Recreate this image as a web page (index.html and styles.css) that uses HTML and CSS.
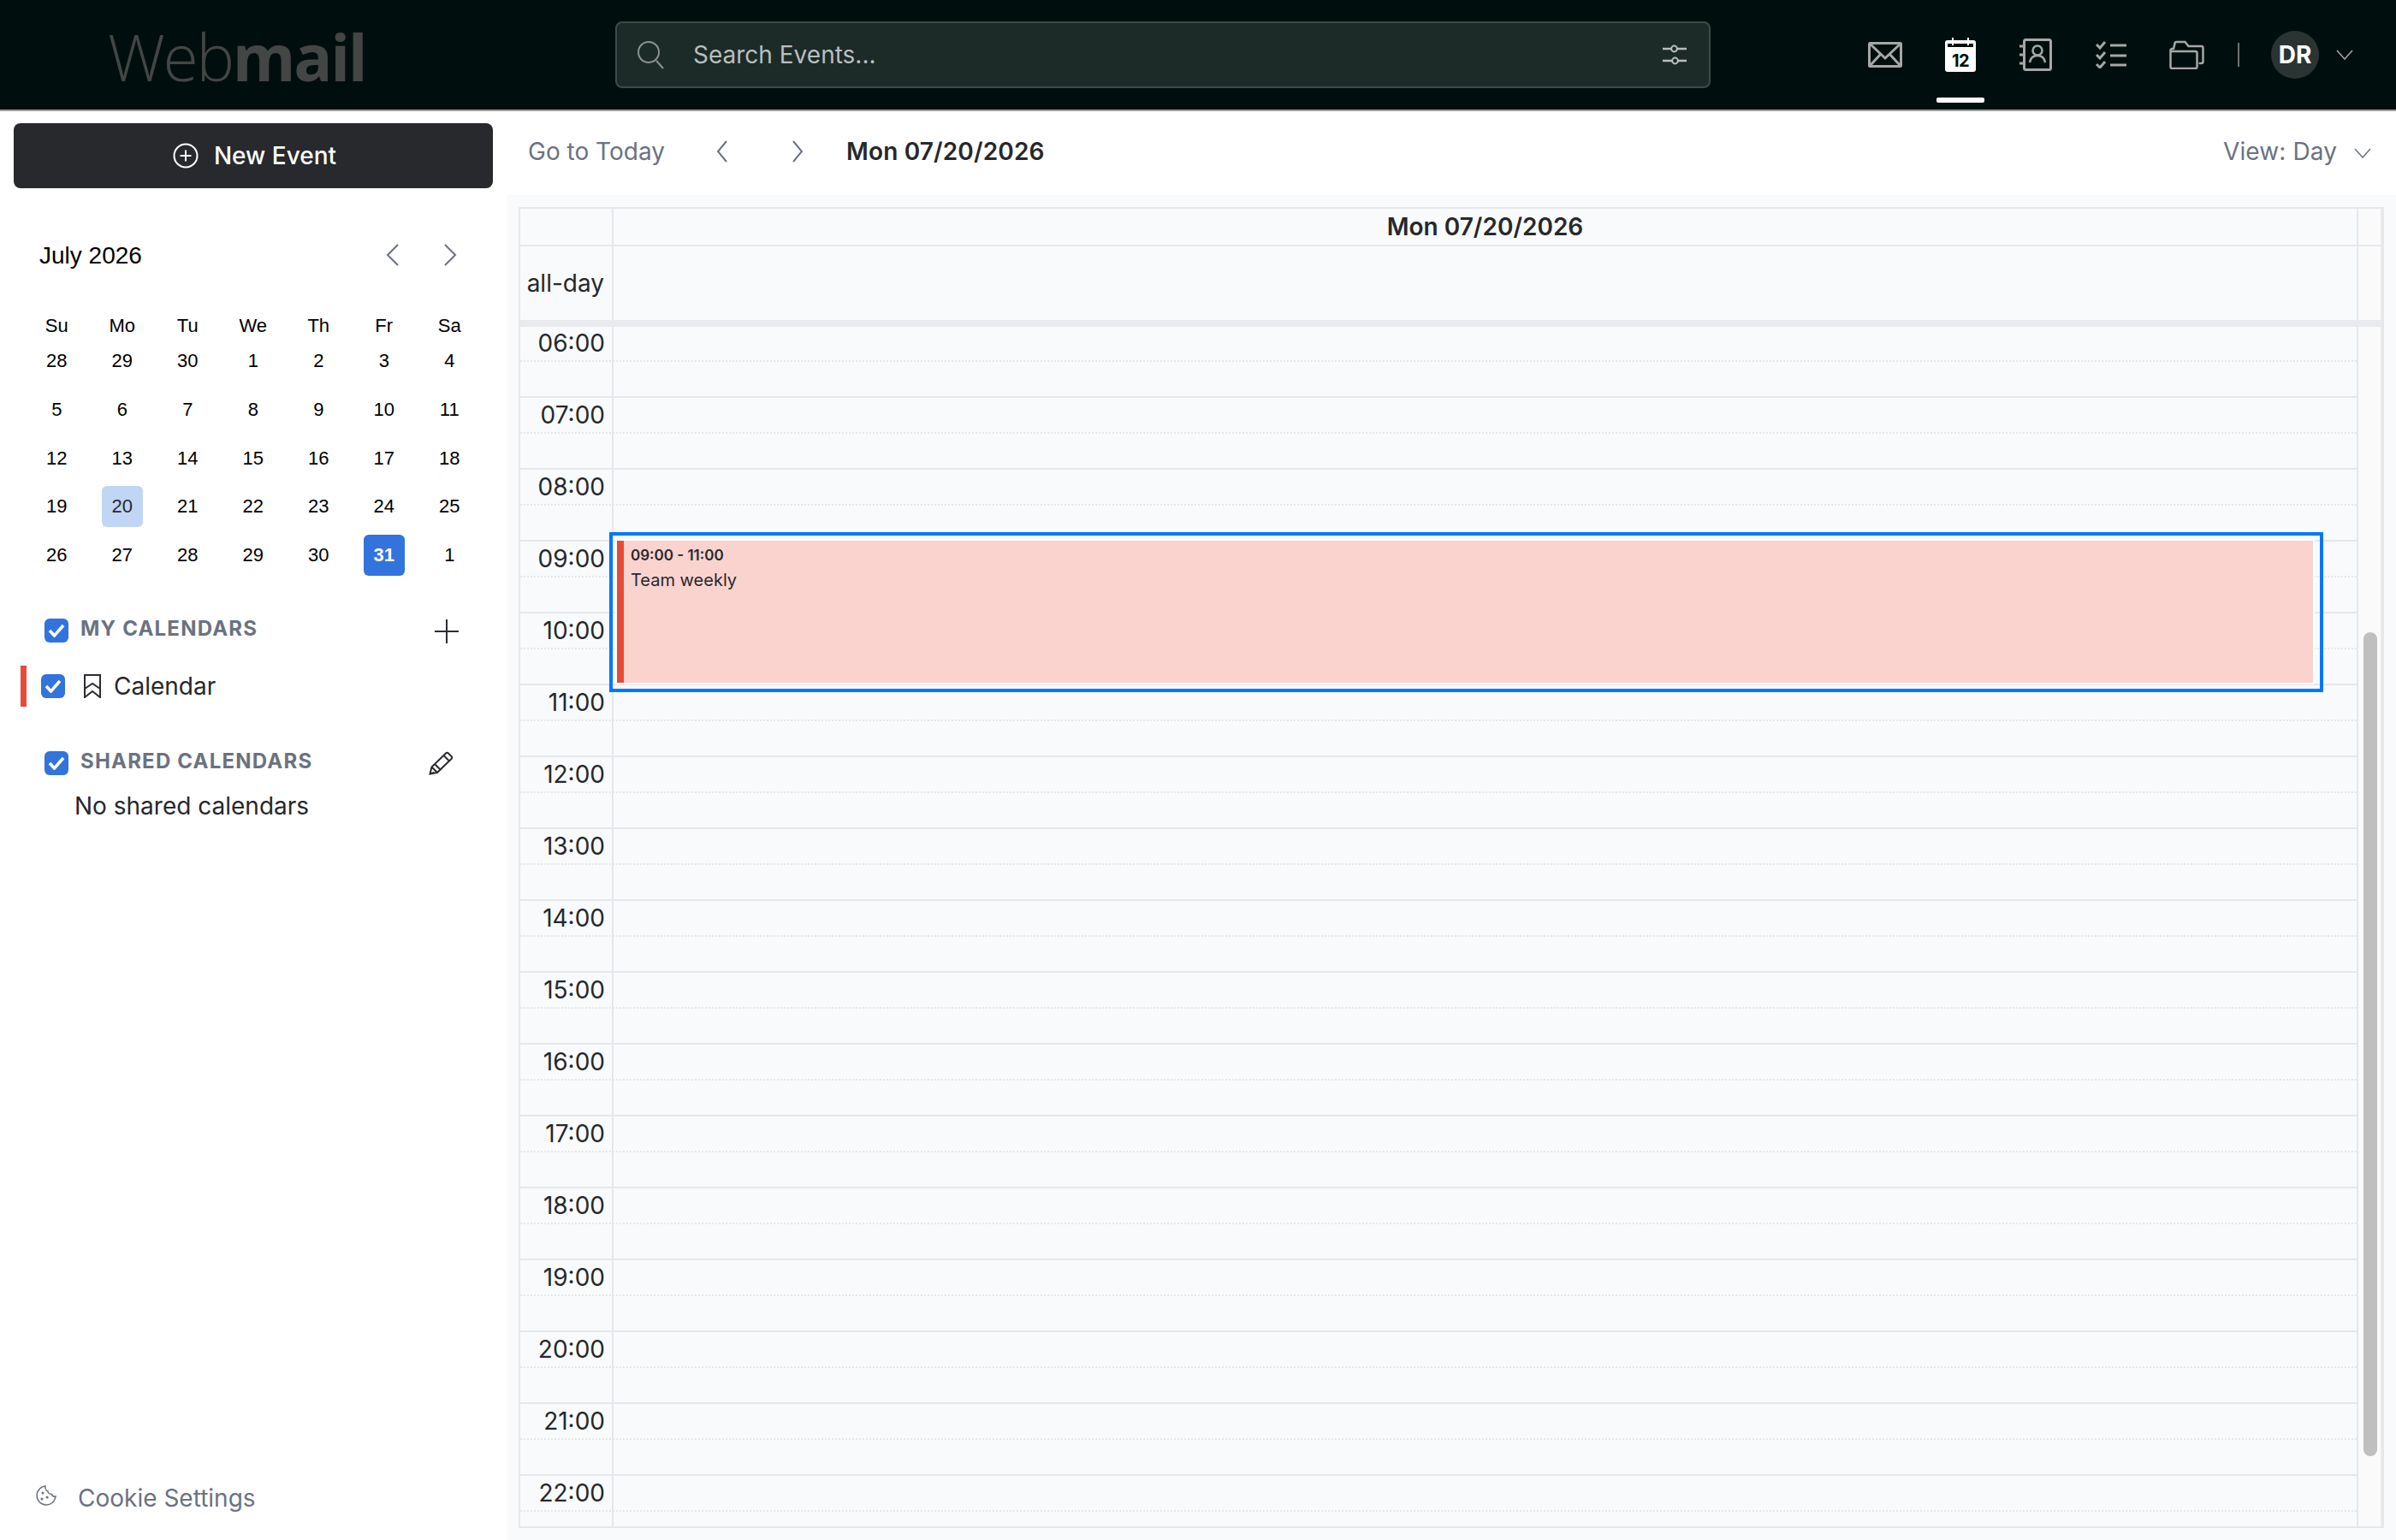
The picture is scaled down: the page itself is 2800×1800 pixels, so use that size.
FILE: index.html
```html
<!DOCTYPE html>
<html lang="en">
<head>
    <meta charset="UTF-8">
    <meta name="viewport" content="width=device-width, initial-scale=1.0">
    <title>Webmail Calendar</title>
    <link rel="stylesheet" href="styles.css">
</head>
<body>

    <header class="topbar">
        <div class="logo"><span class="logo-light">Web</span><span class="logo-bold">mail</span></div>

        <div class="search">
            <svg class="search-icon" width="32" height="34" viewBox="0 0 32 34" fill="none" stroke="#8b9391" stroke-width="2">
                <circle cx="13" cy="14" r="12"/>
                <path d="M22 24l8 9"/>
            </svg>
            <span class="search-text">Search Events...</span>
            <svg class="search-filter" width="28" height="26" viewBox="0 0 28 26" fill="none" stroke="#b9bfbd" stroke-width="2.5">
                <path d="M0 6h10M17 6h11M0 20h11M18 20h10"/>
                <circle cx="13.5" cy="6" r="3.4" stroke-width="2"/>
                <circle cx="14.5" cy="20" r="3.4" stroke-width="2"/>
            </svg>
        </div>

        <nav class="apps">
            <a class="app">
                <svg width="40" height="30" viewBox="0 0 40 30" fill="none" stroke="#a4a8a6" stroke-width="3">
                    <rect x="1.5" y="1.5" width="37" height="27" rx="1"/>
                    <path d="M2 2l18 17L38 2M2 28l13-14M38 28L25 14"/>
                </svg>
            </a>
            <a class="app app-active">
                <svg width="36" height="40" viewBox="0 0 36 40">
                    <path d="M3 3h5V0h2v3h16V0h2v3h5a3 3 0 0 1 3 3v31a3 3 0 0 1-3 3H3a3 3 0 0 1-3-3V6a3 3 0 0 1 3-3z" fill="#fff"/>
                    <rect x="3" y="7" width="30" height="4" fill="#000f0d"/>
                    <path d="M8 3h2v6H8zM26 3h2v6h-2z" fill="#fff"/>
                    <text class="app-date" x="18" y="34" text-anchor="middle">12</text>
                </svg>
            </a>
            <a class="app">
                <svg width="38" height="38" viewBox="0 0 38 38" fill="none" stroke="#a4a8a6" stroke-width="3">
                    <rect x="5.5" y="1.5" width="31" height="35" rx="2"/>
                    <circle cx="21" cy="14" r="5.5" stroke-width="2.5"/>
                    <path d="M12 28c1-6 5-8 9-8s8 2 9 8" stroke-width="2.5"/>
                    <path d="M0 9h5M0 19h5M0 29h5"/>
                </svg>
            </a>
            <a class="app">
                <svg width="36" height="32" viewBox="0 0 36 32" fill="none" stroke="#a4a8a6" stroke-width="3">
                    <path d="M1 4l4 4 6-7M1 16l4 4 6-7M1 27l4 4 6-7"/>
                    <path d="M17 5h19M17 17h19M17 28h19"/>
                </svg>
            </a>
            <a class="app">
                <svg width="41" height="34" viewBox="0 0 41 34" fill="none" stroke="#a4a8a6" stroke-width="2.5">
                    <path d="M1.5 31V12a2 2 0 0 1 2-2h1.500l1.500-6a2 2 0 0 1 2-2h10l4 5h15a2 2 0 0 1 2 2v16a2 2 0 0 1-2 2h-3"/>
                    <path d="M1.5 31a2 2 0 0 0 2 2h27a2 2 0 0 0 2-2V15a2 2 0 0 0-2-2H1.500"/>
                </svg>
            </a>
        </nav>

        <span class="topbar-divider"></span>
        <span class="avatar">DR</span>
        <svg class="topbar-caret" width="20" height="12" viewBox="0 0 20 12" fill="none" stroke="#a4a8a6" stroke-width="1.5">
            <path d="M1 1l9 10 9-10"/>
        </svg>
    </header>

    <div class="content">
        <aside class="sidebar">
            <button class="new-event" type="button">
                <svg width="30" height="30" viewBox="0 0 30 30" fill="none" stroke="#fff" stroke-width="2">
                    <circle cx="15" cy="15" r="13.5"/>
                    <path d="M15 8.5v13M8.5 15h13"/>
                </svg>
                New Event
            </button>

            <div class="mini-head">
                <span class="mini-title">July 2026</span>
                <svg class="mini-prev" width="16" height="26" viewBox="0 0 16 26" fill="none" stroke="#6b7280" stroke-width="2">
                    <path d="M14 1L2 13l12 12"/>
                </svg>
                <svg class="mini-next" width="16" height="26" viewBox="0 0 16 26" fill="none" stroke="#6b7280" stroke-width="2">
                    <path d="M2 1l12 12L2 25"/>
                </svg>
            </div>

            <div class="mini-week">
                <span>Su</span><span>Mo</span><span>Tu</span><span>We</span><span>Th</span><span>Fr</span><span>Sa</span>
            </div>
            <div class="mini-dates">
                <span>28</span><span>29</span><span>30</span><span>1</span><span>2</span><span>3</span><span>4</span>
                <span>5</span><span>6</span><span>7</span><span>8</span><span>9</span><span>10</span><span>11</span>
                <span>12</span><span>13</span><span>14</span><span>15</span><span>16</span><span>17</span><span>18</span>
                <span>19</span><span class="mini-selected">20</span><span>21</span><span>22</span><span>23</span><span>24</span><span>25</span>
                <span>26</span><span>27</span><span>28</span><span>29</span><span>30</span><span class="mini-today">31</span><span>1</span>
            </div>

            <div class="cal-section cal-section-mine">
                <span class="check"><svg width="20" height="16" viewBox="0 0 20 16" fill="none" stroke="#fff" stroke-width="3.5"><path d="M2 8l5.500 6L18 2"/></svg></span>
                <span class="cal-section-title">MY CALENDARS</span>
                <svg class="cal-section-add" width="28" height="28" viewBox="0 0 28 28" fill="none" stroke="#2a2c30" stroke-width="2">
                    <path d="M14 0v28M0 14h28"/>
                </svg>
            </div>

            <div class="cal-item">
                <span class="cal-color"></span>
                <span class="check"><svg width="20" height="16" viewBox="0 0 20 16" fill="none" stroke="#fff" stroke-width="3.5"><path d="M2 8l5.500 6L18 2"/></svg></span>
                <svg class="cal-bookmark" width="20" height="28" viewBox="0 0 20 28" fill="none" stroke="#2a2c30" stroke-width="2">
                    <path d="M1 1h18v26l-9-7-9 7zM1 17l9-6 9 6"/>
                </svg>
                <span class="cal-name">Calendar</span>
            </div>

            <div class="cal-section cal-section-shared">
                <span class="check"><svg width="20" height="16" viewBox="0 0 20 16" fill="none" stroke="#fff" stroke-width="3.5"><path d="M2 8l5.500 6L18 2"/></svg></span>
                <span class="cal-section-title">SHARED CALENDARS</span>
                <svg class="cal-section-edit" width="29" height="28" viewBox="0 0 29 28" fill="none" stroke="#2a2c30" stroke-width="2">
                    <path d="M1.5 26.5l2-8L20 2.500a2 2 0 0 1 3 0l3.500 3.500a2 2 0 0 1 0 3L10 25z"/>
                    <path d="M3.500 18.500L10 25M7 15l7 7M17.500 5l6.500 6.500M1.500 26.500l5-1.500"/>
                </svg>
            </div>
            <div class="cal-empty">No shared calendars</div>

            <a class="cookie">
                <svg width="24" height="24" viewBox="0 0 24 24" fill="none" stroke="#6b7280" stroke-width="1.5">
                    <path d="M11 1a11 11 0 1 0 12 12c-2 .5-4-.5-4.500-2.500C16 10.500 14 9 14 7c-2-.5-3.500-3-3-6z"/>
                    <circle cx="8" cy="9" r=".8"/><circle cx="13" cy="14" r=".8"/><circle cx="7" cy="16" r=".8"/>
                </svg>
                <span>Cookie Settings</span>
            </a>
        </aside>

        <main class="main">
            <div class="toolbar">
                <span class="toolbar-today">Go to Today</span>
                <svg class="toolbar-prev" width="14" height="26" viewBox="0 0 14 26" fill="none" stroke="#6b7280" stroke-width="2">
                    <path d="M12 1L2 13l10 12"/>
                </svg>
                <svg class="toolbar-next" width="14" height="26" viewBox="0 0 14 26" fill="none" stroke="#6b7280" stroke-width="2">
                    <path d="M2 1l10 12L2 25"/>
                </svg>
                <span class="toolbar-date">Mon 07/20/2026</span>
                <span class="toolbar-view">View: Day</span>
                <svg class="toolbar-caret" width="20" height="12" viewBox="0 0 20 12" fill="none" stroke="#6b7280" stroke-width="1.5">
                    <path d="M1 1l9 10 9-10"/>
                </svg>
            </div>

            <div class="board">
                <div class="frame">
                    <div class="head-row">
                        <div class="head-time"></div>
                        <div class="head-day">Mon 07/20/2026</div>
                        <div class="head-gutter"></div>
                    </div>
                    <div class="allday-row">
                        <div class="head-time">all-day</div>
                        <div class="head-day"></div>
                        <div class="head-gutter"></div>
                    </div>

                    <div class="scroller">
                        <div class="slots">
                            <div class="slot"><div class="slot-half">06:00</div></div>
                            <div class="slot"><div class="slot-half">07:00</div></div>
                            <div class="slot"><div class="slot-half">08:00</div></div>
                            <div class="slot"><div class="slot-half">09:00</div></div>
                            <div class="slot"><div class="slot-half">10:00</div></div>
                            <div class="slot"><div class="slot-half">11:00</div></div>
                            <div class="slot"><div class="slot-half">12:00</div></div>
                            <div class="slot"><div class="slot-half">13:00</div></div>
                            <div class="slot"><div class="slot-half">14:00</div></div>
                            <div class="slot"><div class="slot-half">15:00</div></div>
                            <div class="slot"><div class="slot-half">16:00</div></div>
                            <div class="slot"><div class="slot-half">17:00</div></div>
                            <div class="slot"><div class="slot-half">18:00</div></div>
                            <div class="slot"><div class="slot-half">19:00</div></div>
                            <div class="slot"><div class="slot-half">20:00</div></div>
                            <div class="slot"><div class="slot-half">21:00</div></div>
                            <div class="slot"><div class="slot-half">22:00</div></div>
                        </div>
                        <div class="head-gutter"><div class="thumb"></div></div>

                        <div class="event-focus">
                            <div class="event">
                                <div class="event-time">09:00 - 11:00</div>
                                <div class="event-title">Team weekly</div>
                            </div>
                        </div>
                    </div>
                </div>
            </div>
        </main>
    </div>

</body>
</html>
```

FILE: styles.css
```css
* {
    box-sizing: border-box;
}

body {
    margin: 0;
    height: 100vh;
    display: flex;
    flex-direction: column;
    overflow: hidden;
    background-color: #ffffff;
    color: #26282c;
    font-family: Inter, "Noto Sans", sans-serif;
    font-size: 28px;
    line-height: 36px;
}

/* Top bar */
.topbar {
    flex: none;
    height: 130px;
    display: flex;
    align-items: center;
    background-color: #000f0d;
    border-bottom: 2px solid #9a9f9d;
}

.logo {
    width: 719px;
    padding-left: 126px;
    padding-top: 4px;
    font-family: "Open Sans", sans-serif;
    font-size: 75px;
    line-height: 84px;
    color: #434645;
    letter-spacing: -2.3px;
}

.logo-light {
    font-weight: 300;
}

.logo-bold {
    font-weight: 700;
}

.search {
    width: 1280px;
    height: 78px;
    display: flex;
    align-items: center;
    padding: 0 26px 0 24px;
    background-color: #1c2a28;
    border: 2px solid #3d4a48;
    border-radius: 8px;
    color: #b9bfbd;
}

.search-text {
    margin-left: 33px;
}

.search-filter {
    margin-left: auto;
}

.apps {
    display: flex;
    margin-left: 160px;
}

.app {
    position: relative;
    width: 88px;
    height: 128px;
    display: flex;
    align-items: center;
    justify-content: center;
}

.app-active::after {
    content: "";
    position: absolute;
    left: 16px;
    bottom: 8px;
    width: 56px;
    height: 6px;
    border-radius: 2px;
    background-color: #ffffff;
}

.app-date {
    font-family: Inter, sans-serif;
    font-size: 20px;
    font-weight: 700;
    letter-spacing: -0.5px;
    fill: #000f0d;
}

.topbar-divider {
    width: 2px;
    height: 28px;
    margin-left: 16px;
    background-color: #6d7372;
}

.avatar {
    width: 56px;
    height: 56px;
    margin-left: 37px;
    display: flex;
    align-items: center;
    justify-content: center;
    border-radius: 50%;
    background-color: #2a3533;
    color: #ffffff;
    font-weight: 700;
}

.topbar-caret {
    margin-left: 20px;
}

/* Layout below the top bar */
.content {
    flex: 1;
    min-height: 0;
    display: flex;
}

.sidebar {
    width: 592px;
    display: flex;
    flex-direction: column;
    padding-top: 14px;
}

.new-event {
    width: 560px;
    height: 76px;
    margin-left: 16px;
    padding: 0 0 0 3px;
    display: flex;
    align-items: center;
    justify-content: center;
    gap: 18px;
    background-color: #28292c;
    border: none;
    border-radius: 8px;
    color: #ffffff;
    font: 500 28px Inter, sans-serif;
}

/* Small month calendar */
.mini-head {
    display: flex;
    align-items: center;
    height: 36px;
    margin-top: 60px;
    padding-left: 46px;
}

.mini-title {
    font-family: "Liberation Sans", Arial, sans-serif;
    color: #000000;
    padding-top: 1px;
}

.mini-prev {
    margin-left: auto;
}

.mini-next {
    margin-left: 51px;
    margin-right: 58px;
}

.mini-week,
.mini-dates {
    display: grid;
    grid-template-columns: repeat(7, 76.5px);
    margin-left: 28px;
    font-family: "Liberation Sans", Arial, sans-serif;
    font-size: 22px;
    color: #000000;
}

.mini-week {
    height: 26px;
    line-height: 26px;
    margin-top: 52px;
    text-align: center;
}

.mini-dates {
    grid-auto-rows: 48px;
    row-gap: 8.75px;
    margin-top: 4px;
}

.mini-dates span {
    width: 48px;
    justify-self: center;
    display: flex;
    align-items: center;
    justify-content: center;
    border-radius: 6px;
}

.mini-selected {
    background-color: #c1d5f5;
    color: #26282c;
}

.mini-today {
    background-color: #3273dc;
    color: #ffffff;
    font-weight: 700;
}

/* Calendar lists */
.check {
    flex: none;
    width: 28px;
    height: 28px;
    display: flex;
    align-items: center;
    justify-content: center;
    border-radius: 6px;
    background-color: #3273dc;
}

.cal-section {
    display: flex;
    align-items: center;
    height: 28px;
    padding-left: 52px;
}

.cal-section-mine {
    margin-top: 50px;
}

.cal-section-shared {
    margin-top: 52px;
}

.cal-section-title {
    margin-left: 14px;
    margin-top: -4px;
    font-size: 24px;
    font-weight: 700;
    line-height: 28px;
    letter-spacing: 1.2px;
    color: #6b7280;
}

.cal-section-add {
    margin-left: auto;
    margin-right: 56px;
    margin-top: 2px;
}

.cal-section-edit {
    margin-left: auto;
    margin-right: 62px;
}

.cal-item {
    display: flex;
    align-items: center;
    height: 48px;
    margin-top: 27px;
    padding-left: 24px;
}

.cal-color {
    width: 7px;
    height: 48px;
    background-color: #e54c38;
}

.cal-item .check {
    margin-left: 17px;
}

.cal-bookmark {
    margin-left: 22px;
}

.cal-name {
    margin-left: 15px;
}

.cal-empty {
    margin-top: 18px;
    padding-left: 87px;
}

.cookie {
    margin-top: auto;
    margin-bottom: 31px;
    padding-left: 42px;
    display: flex;
    align-items: flex-start;
    gap: 25px;
    color: #6b7280;
}

.cookie svg {
    margin-top: 3px;
}

/* Main column */
.main {
    flex: 1;
    min-width: 0;
    display: flex;
    flex-direction: column;
}

.toolbar {
    flex: none;
    height: 98px;
    display: flex;
    align-items: center;
    padding: 0 29px 4px 25px;
    color: #6b7280;
}

.toolbar-prev {
    margin-left: 60px;
}

.toolbar-next {
    margin-left: 74px;
}

.toolbar-date {
    margin-left: 50px;
    font-weight: 600;
    letter-spacing: 0.15px;
    color: #26282c;
}

.toolbar-view {
    margin-left: auto;
    letter-spacing: 0.1px;
}

.toolbar-caret {
    margin-left: 20px;
    margin-top: 4px;
}

.board {
    flex: 1;
    min-height: 0;
    padding: 14px;
    background-color: #f9fafb;
}

.frame {
    height: 100%;
    display: flex;
    flex-direction: column;
    border: 2px solid #e5e7eb;
}

.head-row,
.allday-row {
    flex: none;
    display: flex;
}

.head-row {
    height: 44px;
    border-bottom: 2px solid #e5e7eb;
}

.allday-row {
    height: 94px;
    border-bottom: 8px solid #e8eaed;
}

.head-time {
    flex: none;
    width: 109px;
    padding: 0 9px 0 0;
    text-align: right;
    line-height: 86px;
    border-right: 2px solid #e5e7eb;
}

.head-day {
    flex: 1;
    text-align: center;
    font-weight: 600;
    line-height: 42px;
}

.head-gutter {
    flex: none;
    position: relative;
    width: 30px;
    background-color: #fafafa;
    border-left: 2px solid #e5e7eb;
    border-right: 2px solid #ebebeb;
}

/* Time grid */
.scroller {
    flex: 1;
    min-height: 0;
    position: relative;
    display: flex;
    overflow: hidden;
}

.slots {
    flex: 1;
    min-width: 0;
    margin-top: -3px;
    background-image: linear-gradient(#e5e7eb, #e5e7eb);
    background-size: 2px 100%;
    background-position: 107px 0;
    background-repeat: no-repeat;
}

.slot {
    height: 84px;
    border-top: 2px solid #e5e7eb;
}

.slot-half {
    height: 42px;
    padding-right: 2047px;
    text-align: right;
    line-height: 40px;
    border-bottom: 2px dotted #e5e7eb;
    white-space: nowrap;
}

.thumb {
    position: absolute;
    left: 6px;
    top: 357px;
    width: 16px;
    height: 963px;
    border-radius: 8px;
    background-color: #bfbfbf;
}

/* Event sits over the grid */
.event-focus {
    position: absolute;
    left: 104px;
    top: 240px;
    width: 2003px;
    height: 187px;
    padding: 6px 8px 7px 5px;
    border: 4px solid #0077ff;
}

.event {
    height: 100%;
    padding: 2px 0 0 8px;
    background-color: #fad3cf;
    border-left: 8px solid #e54c38;
    box-shadow: 0 0 0 2px #ffffff;
}

.event-time {
    font-size: 17px;
    font-weight: 600;
    line-height: 30px;
}

.event-title {
    font-size: 20px;
    line-height: 28px;
}
```
